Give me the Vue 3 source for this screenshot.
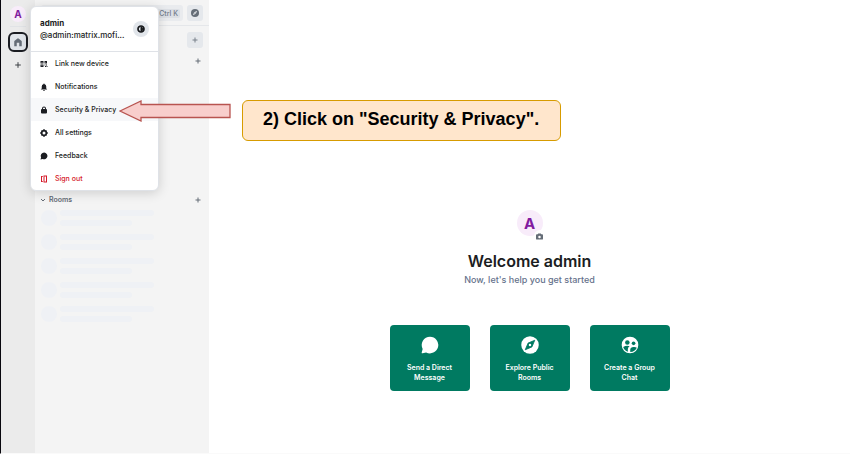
<script setup>
const menuItems = [
  { id: 'device', label: 'Link new device' },
  { id: 'bell', label: 'Notifications' },
  { id: 'lock', label: 'Security & Privacy', active: true },
  { id: 'gear', label: 'All settings' },
  { id: 'chat', label: 'Feedback' },
  { id: 'leave', label: 'Sign out', danger: true },
]
const actions = [
  { id: 'message', lines: ['Send a Direct', 'Message'] },
  { id: 'explore', lines: ['Explore Public', 'Rooms'] },
  { id: 'group', lines: ['Create a Group', 'Chat'] },
]
</script>

<template>
  <div class="app">
    <nav class="rail" aria-label="Spaces">
      <button class="avatar small" aria-label="User menu">A</button>
      <hr class="rail-line" />
      <button class="home" aria-label="Home">
        <svg viewBox="0 0 24 24" width="10" height="10"><path d="M3 22V10.5Q3 9.500 4 8.700L10.800 3.400Q12 2.500 13.200 3.400L20 8.700Q21 9.500 21 10.500V22H15V14H9V22Z" fill="#656d77" /></svg>
      </button>
      <button class="plain" aria-label="Create a space">
        <svg viewBox="0 0 8 8" width="8" height="8"><path d="M4 1.200V6.800M1.200 4H6.800" stroke="#3c4045" stroke-width="1" /></svg>
      </button>
    </nav>

    <aside class="panel">
      <header class="search-row">
        <button class="search" aria-label="Search"><kbd>Ctrl K</kbd></button>
        <button class="square" aria-label="Explore rooms">
          <svg viewBox="0 0 24 24" width="8" height="8"><circle cx="12" cy="12" r="12" fill="#656d77" /><path d="M18.500 5.500L14.500 14.500L5.500 18.500L9.500 9.500Z" fill="#e6e8eb" /><circle cx="12" cy="12" r="1.800" fill="#656d77" /></svg>
        </button>
      </header>
      <div class="add-row">
        <button class="square" aria-label="Add">
          <svg viewBox="0 0 8 8" width="8" height="8"><path d="M4 1.500V6.500M1.500 4H6.500" stroke="#78808a" stroke-width="1" /></svg>
        </button>
      </div>
      <div class="people-row">
        <button class="plain" aria-label="Start chat">
          <svg viewBox="0 0 8 8" width="8" height="8"><path d="M4 1.500V6.500M1.500 4H6.500" stroke="#656d77" stroke-width="1" /></svg>
        </button>
      </div>
      <section class="rooms">
        <div class="rooms-head">
          <button class="rooms-toggle">
            <svg viewBox="0 0 6 6" width="6" height="6"><path d="M1 2L3 4L5 2" fill="none" stroke="#656d77" stroke-width="1" /></svg>
            Rooms
          </button>
          <button class="plain" aria-label="Add room">
            <svg viewBox="0 0 8 8" width="8" height="8"><path d="M4 1.500V6.500M1.500 4H6.500" stroke="#656d77" stroke-width="1" /></svg>
          </button>
        </div>
        <div v-for="n in 5" :key="n" class="skeleton">
          <span class="disc"></span>
          <span class="bars"><i></i><i></i></span>
        </div>
      </section>
    </aside>

    <main class="welcome">
      <div class="portrait">
        <div class="avatar large">A</div>
        <button class="camera" aria-label="Upload avatar">
          <svg viewBox="0 0 16 14" width="7" height="7"><path d="M5 0H11L12 2H14Q16 2 16 4V12Q16 14 14 14H2Q0 14 0 12V4Q0 2 2 2H4Z" fill="#656d77" /><circle cx="8" cy="8" r="2.800" fill="#fff" /></svg>
        </button>
      </div>
      <h1>Welcome admin</h1>
      <h2>Now, let's help you get started</h2>
      <div class="actions">
        <button v-for="a in actions" :key="a.id" class="action">
          <svg viewBox="0 0 24 24" width="20" height="20">
            <path v-if="a.id === 'message'" d="M12 2A10 10 0 1 1 7.300 20.850L3.200 22Q1.700 22.300 2.100 20.800L3.200 16.700A10 10 0 0 1 12 2Z" fill="#fff" />
            <template v-else-if="a.id === 'explore'">
              <circle cx="12" cy="12" r="10.500" fill="#fff" />
              <path d="M17.700 6.300L14.300 14.300L6.300 17.700L9.700 9.700Z" fill="#007a61" stroke="#007a61" stroke-linejoin="round" />
              <circle cx="12" cy="12" r="1.500" fill="#fff" />
            </template>
            <template v-else>
              <circle cx="12" cy="12" r="10" fill="#fff" />
              <circle cx="8.800" cy="9" r="2.700" fill="#007a61" />
              <circle cx="16.300" cy="10" r="2.200" fill="#007a61" />
              <path d="M3.800 14.500Q8 12 11.500 13.500Q9.400 14.800 9.400 17V20Q5.300 19 3.800 14.500ZM12.300 20.300V17.300Q12.500 15 16.300 14.500Q18.800 14.300 20.200 15.300Q18 20.300 12.300 20.300Z" fill="#007a61" />
            </template>
          </svg>
          <span><template v-for="(line, i) in a.lines" :key="line"><br v-if="i" />{{ line }}</template></span>
        </button>
      </div>
    </main>

    <div class="menu">
      <header class="menu-head">
        <div class="who">
          <strong>admin</strong>
          <span>@admin:matrix.mofi...</span>
        </div>
        <button class="theme" aria-label="Switch theme">
          <svg viewBox="0 0 16 16" width="8" height="8"><circle cx="8" cy="8" r="6" fill="none" stroke="#17191c" stroke-width="3.400" /><path d="M7 3A5 5 0 0 1 7 13Z" fill="#17191c" /></svg>
        </button>
      </header>
      <ul>
        <li v-for="m in menuItems" :key="m.id">
          <button class="item" :class="{ active: m.active, danger: m.danger }">
            <svg viewBox="0 0 16 16" width="8" height="8" fill="currentColor">
              <path v-if="m.id === 'device'" fill-rule="evenodd" d="M1 2H7V7H1ZM3 4V5H5V4ZM9 2H14V7H9ZM11 4V5H12V4ZM1 9H7V14H1ZM3 11V12H5V11ZM9 9H11V11H9ZM12 9H14V11H12ZM10 12H12V14H10ZM13 12H15V14H13Z" />
              <path v-else-if="m.id === 'bell'" d="M8 1Q9.200 1 9.200 2.400Q12.500 3.500 12.500 7V11L14.500 13H1.500L3.500 11V7Q3.500 3.500 6.800 2.400Q6.800 1 8 1ZM6.300 14H9.700Q9.500 16 8 16Q6.500 16 6.300 14Z" />
              <path v-else-if="m.id === 'lock'" fill-rule="evenodd" d="M4 6V5Q4 1 8 1Q12 1 12 5V6Q14 6 14 8V13Q14 15 12 15H4Q2 15 2 13V8Q2 6 4 6ZM6 6H10V5Q10 3 8 3Q6 3 6 5Z" />
              <path v-else-if="m.id === 'gear'" fill-rule="evenodd" d="M6.500 0.500H9.500L10 2.500L12 1.800L14.200 4L13.500 6L15.500 6.500V9.500L13.500 10L14.200 12L12 14.200L10 13.500L9.500 15.500H6.500L6 13.500L4 14.200L1.800 12L2.500 10L0.500 9.500V6.500L2.500 6L1.800 4L4 1.800L6 2.500ZM8 5A3 3 0 1 0 8 11A3 3 0 1 0 8 5Z" />
              <path v-else-if="m.id === 'chat'" d="M8.500 1A6.800 6.800 0 1 1 5.300 14L1 15L2.200 10.800A6.800 6.800 0 0 1 8.500 1Z" />
              <path v-else fill-rule="evenodd" d="M2 2H6V3.500H4V12.500H6V14H2ZM7 1H14V15H7ZM9 3V13H12V3Z" />
            </svg>
            {{ m.label }}
          </button>
        </li>
      </ul>
    </div>

    <svg class="arrow" viewBox="0 0 112 22" width="112" height="22" aria-hidden="true"><path d="M1 11L22 1V4.500H111V17.500H22V21Z" fill="#f8cecc" stroke="#b85450" stroke-width="1.300" /></svg>
    <p class="callout">2) Click on "Security &amp; Privacy".</p>
  </div>
</template>

<style>
body {
  margin: 0;
}
</style>

<style scoped>
.app {
  box-sizing: border-box;
  position: relative;
  display: flex;
  min-height: 100vh;
  border-left: 1px solid #08070d;
  border-bottom: 1px solid #fafafa;
  background: #fff;
  color: #1b1d22;
  font-family: Inter, sans-serif;
}
button {
  display: flex;
  align-items: center;
  justify-content: center;
  margin: 0;
  padding: 0;
  border: 0;
  background: none;
  color: inherit;
  font: inherit;
}
svg {
  display: block;
  flex: none;
}
.rail {
  box-sizing: border-box;
  display: flex;
  flex-direction: column;
  align-items: center;
  width: 34px;
  padding-top: 6px;
  background: #ebebeb;
}
.avatar {
  display: flex;
  align-items: center;
  justify-content: center;
  border-radius: 50%;
  background: #f8ecfa;
  color: #821ba0;
  font-weight: 700;
}
.small {
  width: 16px;
  height: 16px;
  font-size: 10px;
}
.rail-line {
  width: 16px;
  height: 1px;
  margin: 4px 0 5px;
  border: 0;
  background: #e1e3e6;
}
.home {
  box-sizing: border-box;
  width: 20px;
  height: 20px;
  border: 2px solid #1b1d22;
  border-radius: 6px;
  background: #e1e5ea;
}
.rail .plain {
  margin-top: 9px;
}
.plain {
  width: 8px;
  height: 8px;
}
.panel {
  box-sizing: border-box;
  width: 174px;
  padding: 0 6px;
  background: #f4f4f4;
}
.search-row {
  box-sizing: border-box;
  display: flex;
  align-items: center;
  gap: 4px;
  height: 26px;
  margin: 0 -6px;
  padding: 1px 6px 0;
  border-bottom: 1px solid #e5e7ea;
}
.search {
  flex: 1;
  height: 16px;
  padding-right: 3px;
  justify-content: flex-end;
  border-radius: 3px;
  background: #e9ebee;
}
kbd {
  padding: 0 2px;
  border-radius: 2px;
  background: #dcdfe4;
  color: #737d8c;
  font: 500 7px/9px Inter, sans-serif;
}
.square {
  width: 16px;
  height: 16px;
  border-radius: 3px;
  background: #e5e8ec;
}
.add-row,
.people-row {
  display: flex;
  justify-content: flex-end;
}
.add-row {
  padding-top: 6px;
}
.people-row {
  padding: 9px 1px 0 0;
}
.rooms {
  padding-top: 130px;
}
.rooms-head {
  display: flex;
  align-items: center;
  justify-content: space-between;
  height: 10px;
  margin-bottom: 5px;
  padding-right: 1px;
}
.rooms-toggle {
  gap: 3px;
  color: #656d77;
  font-size: 7px;
  line-height: 10px;
  font-weight: 600;
}
.rooms-toggle svg {
  margin-left: -1px;
}
.skeleton {
  display: flex;
  gap: 3px;
  height: 24px;
}
.disc {
  width: 16px;
  height: 16px;
  border-radius: 50%;
  background: #eff1f5;
}
.bars {
  flex: 1;
}
.bars i {
  display: block;
  width: 66%;
  height: 6px;
  margin-bottom: 4px;
  border-radius: 3px;
  background: #eff1f5;
}
.bars i + i {
  width: 50%;
}
.welcome {
  flex: 1;
  display: flex;
  flex-direction: column;
  align-items: center;
  padding-top: 210px;
}
.portrait {
  position: relative;
}
.large {
  width: 26px;
  height: 26px;
  font-size: 15px;
}
.camera {
  position: absolute;
  right: -3px;
  bottom: -6px;
  width: 12px;
  height: 12px;
  border-radius: 50%;
  background: #fff;
}
h1 {
  margin: 14px 0 0;
  font-size: 16px;
  line-height: 22px;
  font-weight: 600;
}
h2 {
  margin: 1px 0 0;
  color: #66728c;
  font-size: 9px;
  line-height: 14px;
  font-weight: 500;
}
.actions {
  display: flex;
  gap: 20px;
  margin-top: 38px;
}
.action {
  box-sizing: border-box;
  flex-direction: column;
  justify-content: flex-start;
  gap: 8px;
  width: 80px;
  height: 66px;
  padding-top: 10px;
  border-radius: 4px;
  background: #007a61;
  color: #fff;
  font-size: 7px;
  line-height: 10px;
  font-weight: 600;
}
.menu {
  box-sizing: border-box;
  position: absolute;
  top: 6px;
  left: 29px;
  width: 129px;
  overflow: hidden;
  border: 1px solid #dfe2e7;
  border-radius: 6px;
  background: #fff;
  box-shadow: 0 2px 12px rgba(0, 0, 0, 0.16);
}
.menu-head {
  display: flex;
  align-items: center;
  justify-content: space-between;
  height: 44px;
  padding: 0 9px;
  border-bottom: 1px solid #dfe2e7;
}
.who {
  font-size: 8px;
  line-height: 12px;
  font-weight: 500;
}
.who strong,
.who span {
  display: block;
}
.who strong {
  font-weight: 700;
}
.theme {
  flex: none;
  width: 16px;
  height: 16px;
  border-radius: 50%;
  background: #e1e5ea;
}
ul {
  margin: 0;
  padding: 0;
  list-style: none;
}
.item {
  width: 100%;
  height: 23px;
  padding: 0 9px;
  justify-content: flex-start;
  gap: 7px;
  font-size: 7px;
  font-weight: 500;
}
.active {
  background: #f7f8fa;
}
.danger {
  color: #d51928;
}
.arrow {
  position: absolute;
  top: 100px;
  left: 118px;
}
.callout {
  box-sizing: border-box;
  position: absolute;
  top: 100px;
  left: 241px;
  margin: 0;
  padding: 8px 21px 11px 20px;
  border: 1px solid #d79b00;
  border-radius: 6px;
  background: #ffe6cc;
  color: #000;
  font: bold 18px/20px "Liberation Sans", sans-serif;
  white-space: nowrap;
}
</style>
